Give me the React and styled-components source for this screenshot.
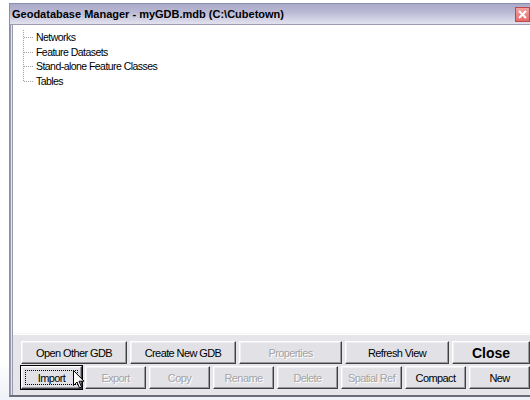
import React from "react";
import styled, { createGlobalStyle } from "styled-components";

const GlobalStyle = createGlobalStyle`
  html, body {
    margin: 0;
    padding: 0;
    background: #ffffff;
    overflow: hidden;
  }
  body {
    font-family: "Liberation Sans", Arial, sans-serif;
    font-size: 11px;
  }
`;

const uiFont = `"Liberation Sans", Arial, sans-serif`;

const Desktop = styled.div`
  width: 530px;
  height: 400px;
  padding: 3px 0 0 9px;
  box-sizing: border-box;
  background: linear-gradient(180deg, #ffffff 0%, #ffffff 90%, #eef1f8 100%);
`;

const Window = styled.div`
  width: 523px;
  height: 394px;
  display: flex;
  flex-direction: column;
  border-left: 1px solid #8d8db0;
  border-top: 1px solid #8d8db0;
  border-bottom: 2px solid #6d6d7a;
  background: #e4e4e8;
  box-sizing: border-box;
`;

const TitleBar = styled.div`
  height: 20px;
  display: flex;
  align-items: center;
  justify-content: space-between;
  padding: 0 2px 0 2px;
  background: linear-gradient(180deg, #a9a9c9 0%, #b9b9d5 40%, #e2e2ee 100%);
  border-bottom: 1px solid #9c9cae;
`;

const Title = styled.span`
  font-family: ${uiFont};
  font-weight: 700;
  font-size: 11px;
  color: #000;
`;

const CloseBox = styled.div`
  width: 13px;
  height: 13px;
  background: linear-gradient(180deg, #f4a0a0 0%, #e86a6a 100%);
  border: 1px solid #c04848;
  display: flex;
  align-items: center;
  justify-content: center;
`;

const Body = styled.div`
  flex: 1;
  display: flex;
  flex-direction: column;
  border-left: 3px double #9b9bb0;
`;

const TreeView = styled.div`
  flex: 1;
  background: #ffffff;
  padding: 5px 0 0 10px;
  border-bottom: 1px solid #f4f4f4;
`;

const TreeList = styled.ul`
  list-style: none;
  margin: 0;
  padding: 0;
  border-left: 1px dotted #a0a0a0;
  width: max-content;
  height: 51px;
`;

const TreeItem = styled.li`
  position: relative;
  height: 14.7px;
  line-height: 14.7px;
  padding-left: 12px;
  color: #000;
  font-family: ${uiFont};
  font-size: 10.5px;
  letter-spacing: -0.55px;
  white-space: nowrap;

  &::before {
    content: "";
    position: absolute;
    left: 0;
    top: 7px;
    width: 9px;
    border-top: 1px dotted #a0a0a0;
  }
`;

const ButtonPanel = styled.div`
  padding: 6px 2px 6px 8px;
  display: flex;
  flex-direction: column;
  gap: 2px;
  background: #e6e6ea;
  border-top: 1px solid #ffffff;
`;

const Row = styled.div`
  display: grid;
  grid-template-columns: ${(p) => p.$cols};
  gap: 3px;
`;

const Button = styled.button`
  position: relative;
  height: 23px;
  padding: 0;
  font-family: ${uiFont};
  font-size: ${(p) => (p.$bold ? "14px" : "11px")};
  font-weight: ${(p) => (p.$bold ? 700 : 400)};
  letter-spacing: ${(p) => (p.$bold ? "0" : "-0.6px")};
  color: ${(p) => (p.disabled ? "#a4a4a8" : "#000")};
  text-shadow: ${(p) => (p.disabled ? "1px 1px 0 #ffffff" : "none")};
  background: #e2e2e6;
  border: 1px solid;
  border-color: #ffffff #404040 #404040 #ffffff;
  box-shadow: inset -1px -1px 0 #9a9a9e, inset 1px 1px 0 #f0f0f2;
  outline: ${(p) => (p.$focused ? "1px solid #000" : "none")};
  outline-offset: 0;
  cursor: default;
  white-space: nowrap;
`;

const FocusRing = styled.span`
  position: absolute;
  inset: 3px;
  border: 1px dotted #000;
  pointer-events: none;
`;

const Pointer = styled.svg`
  position: absolute;
  left: 51px;
  top: 3px;
  pointer-events: none;
`;

const treeNodes = [
  "Networks",
  "Feature Datasets",
  "Stand-alone Feature Classes",
  "Tables",
];

const topRow = [
  { label: "Open Other GDB" },
  { label: "Create New GDB" },
  { label: "Properties", disabled: true },
  { label: "Refresh View" },
  { label: "Close", bold: true },
];

const bottomRow = [
  { label: "Import", focused: true },
  { label: "Export", disabled: true },
  { label: "Copy", disabled: true },
  { label: "Rename", disabled: true },
  { label: "Delete", disabled: true },
  { label: "Spatial Ref", disabled: true },
  { label: "Compact" },
  { label: "New" },
];

function ArrowCursor() {
  return (
    <Pointer width="12" height="19" viewBox="0 0 12 19">
      <path
        d="M0.5 0.5 L0.5 15.5 L4 12 L6.5 18 L8.5 17 L6 11.2 L11 11.2 Z"
        fill="#ffffff"
        stroke="#000000"
        strokeWidth="1"
      />
    </Pointer>
  );
}

export default function App() {
  return (
    <>
      <GlobalStyle />
      <Desktop>
        <Window>
          <TitleBar>
            <Title>Geodatabase Manager - myGDB.mdb (C:\Cubetown)</Title>
            <CloseBox>
              <svg width="9" height="9" viewBox="0 0 9 9">
                <path d="M1 1 L8 8 M8 1 L1 8" stroke="#ffffff" strokeWidth="2" />
              </svg>
            </CloseBox>
          </TitleBar>
          <Body>
            <TreeView>
              <TreeList>
                {treeNodes.map((n) => (
                  <TreeItem key={n}>{n}</TreeItem>
                ))}
              </TreeList>
            </TreeView>
            <ButtonPanel>
              <Row $cols="106px 106px 103px 104px 1fr">
                {topRow.map((b) => (
                  <Button key={b.label} disabled={b.disabled} $bold={b.bold}>
                    {b.label}
                  </Button>
                ))}
              </Row>
              <Row $cols="repeat(8, 1fr)">
                {bottomRow.map((b) => (
                  <Button
                    key={b.label}
                    disabled={b.disabled}
                    $focused={b.focused}
                  >
                    {b.label}
                    {b.focused && <FocusRing />}
                    {b.focused && <ArrowCursor />}
                  </Button>
                ))}
              </Row>
            </ButtonPanel>
          </Body>
        </Window>
      </Desktop>
    </>
  );
}
